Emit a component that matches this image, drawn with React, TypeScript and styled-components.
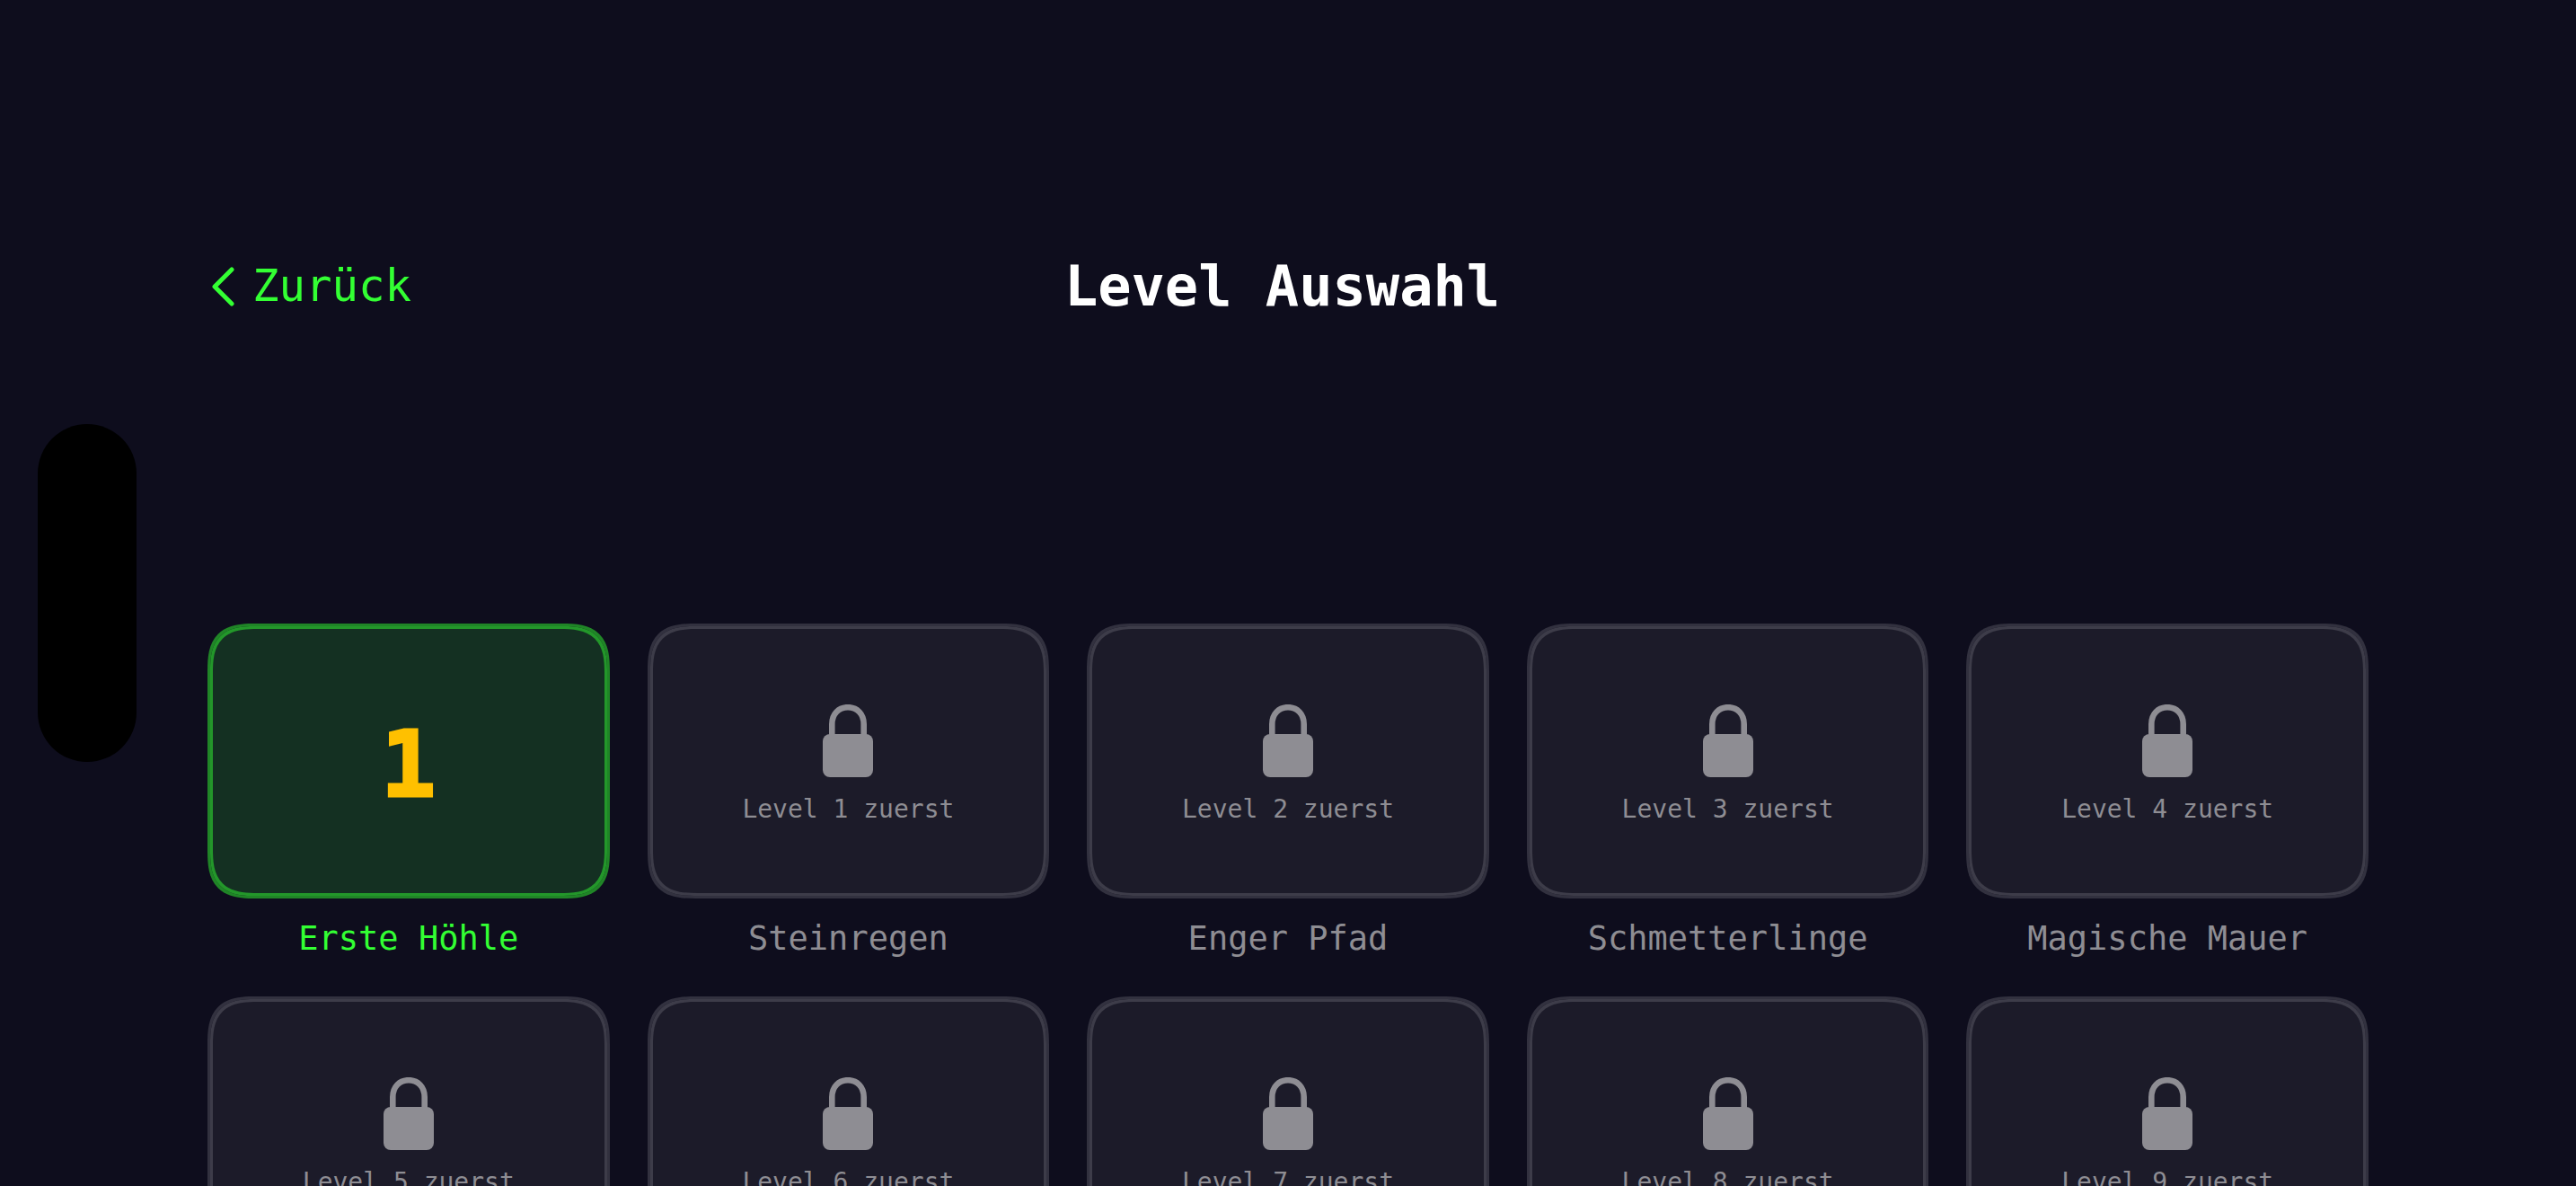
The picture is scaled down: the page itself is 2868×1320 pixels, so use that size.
import React from "react";
import styled, { createGlobalStyle } from "styled-components";

const color = {
  page: "#0e0d1d",
  green: "#33ff33",
  grey: "#8e8d93",
  gold: "#ffc000",
};

const GlobalStyle = createGlobalStyle`
  *, *::before, *::after { box-sizing: border-box; }
  html, body { margin: 0; height: 100%; background: ${color.page}; }
  #root { height: 100%; }
  button { font: inherit; color: inherit; background: none; border: 0; padding: 0; }
`;

const Screen = styled.div`
  height: 100vh;
  overflow: hidden;
  padding: 0 231px;
  background: ${color.page};
  color: #ffffff;
  font-family: "DejaVu Sans Mono", "Liberation Mono", monospace;
`;

const SensorCutout = styled.div`
  position: fixed;
  left: 42px;
  top: 472px;
  width: 110px;
  height: 376px;
  border-radius: 55px;
  background: #000000;
`;

const Header = styled.header`
  display: flex;
  align-items: center;
  justify-content: space-between;
  padding: 284px 0 340px;
`;

const BackButton = styled.button`
  && {
    display: flex;
    align-items: center;
    gap: 18px;
    padding-left: 4px;
    color: ${color.green};
    font-size: 49px;
    line-height: 70px;
    cursor: pointer;
  }
`;

const Title = styled.h1`
  margin: 0;
  font-size: 62px;
  line-height: 70px;
  font-weight: 700;
`;

const HeaderSpacer = styled.div`
  width: 240px;
`;

const LevelGrid = styled.ul`
  display: grid;
  grid-template-columns: repeat(5, 1fr);
  column-gap: 42px;
  row-gap: 40px;
  margin: 0;
  padding: 0;
  list-style: none;
`;

const Level = styled.li`
  display: flex;
  flex-direction: column;
  gap: 20px;
`;

const Card = styled.button<{ $open: boolean }>`
  && {
    display: flex;
    flex-direction: column;
    align-items: center;
    justify-content: center;
    gap: 19px;
    height: 306px;
    padding-top: 8px;
    border: 3px solid ${(p) => (p.$open ? "#208527" : "#32313f")};
    border-radius: 42px;
    background: ${(p) => (p.$open ? "#143022" : "#1c1b29")};
    box-shadow: inset 0 0 0 3px ${(p) => (p.$open ? "#23972a" : "#3d3c49")};
    color: ${color.grey};

    @supports (corner-shape: superellipse(1.5)) {
      border-radius: 54px;
      corner-shape: superellipse(1.5);
    }
  }
`;

const LevelNumber = styled.span`
  color: ${color.gold};
  font-size: 102px;
  line-height: 120px;
  font-weight: 700;
  -webkit-text-stroke: 3px ${color.gold};
`;

const Hint = styled.span`
  font-size: 28px;
  line-height: 34px;
`;

const LevelName = styled.span<{ $open: boolean }>`
  color: ${(p) => (p.$open ? color.green : color.grey)};
  font-size: 37px;
  line-height: 49px;
  text-align: center;
`;

const ChevronIcon = () => (
  <svg width="28" height="44" viewBox="0 0 28 44" fill="none" aria-hidden="true">
    <path d="M23 3L4 22L23 41" stroke="currentColor" strokeWidth="5" strokeLinecap="round" strokeLinejoin="round" />
  </svg>
);

const LockIcon = () => (
  <svg width="56" height="81" viewBox="0 0 56 81" aria-hidden="true">
    <path
      d="M10.300 36V22C10.300 10.500 18 3.200 28 3.200S45.700 10.500 45.700 22V36"
      fill="none"
      stroke="currentColor"
      strokeWidth="6.600"
    />
    <rect x="0" y="33" width="56" height="48" rx="8" fill="currentColor" />
  </svg>
);

const levels = [
  "Erste Höhle",
  "Steinregen",
  "Enger Pfad",
  "Schmetterlinge",
  "Magische Mauer",
  "",
  "",
  "",
  "",
  "",
];

export default function App() {
  return (
    <Screen>
      <GlobalStyle />
      <SensorCutout />
      <Header>
        <BackButton type="button">
          <ChevronIcon />
          Zurück
        </BackButton>
        <Title>Level Auswahl</Title>
        <HeaderSpacer />
      </Header>
      <LevelGrid>
        {levels.map((name, index) => {
          const open = index === 0;
          return (
            <Level key={index}>
              <Card type="button" $open={open} disabled={!open}>
                {open ? (
                  <LevelNumber>{index + 1}</LevelNumber>
                ) : (
                  <>
                    <LockIcon />
                    <Hint>Level {index} zuerst</Hint>
                  </>
                )}
              </Card>
              {name && <LevelName $open={open}>{name}</LevelName>}
            </Level>
          );
        })}
      </LevelGrid>
    </Screen>
  );
}
